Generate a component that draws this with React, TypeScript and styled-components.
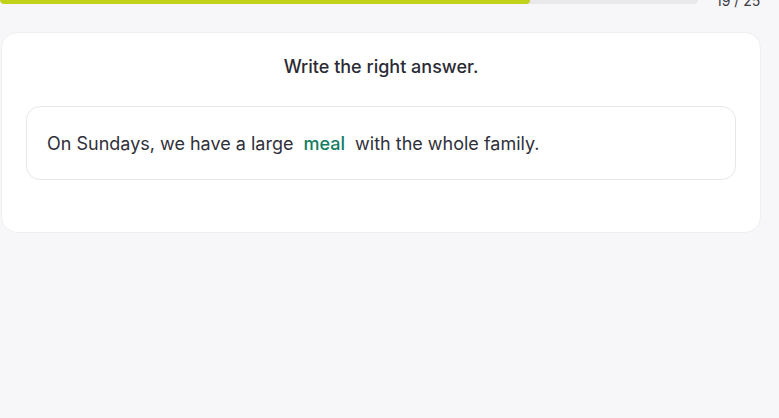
import React from 'react';
import styled, { createGlobalStyle } from 'styled-components';

// --- Global ---
const GlobalStyle = createGlobalStyle`
  html, body {
    margin: 0;
    padding: 0;
    background: #f7f7f9;
    font-family: Inter, "Noto Sans", sans-serif;
    color: #2b2b35;
  }
`;

// --- Styled Components ---
const Page = styled.div`
  width: 760px;
  padding-left: 1px;
  box-sizing: content-box;
`;

const ProgressRow = styled.div`
  display: flex;
  align-items: center;
  gap: 18px;
  margin-top: -11px;
  margin-left: -1px;
  height: 22px;
`;

const Track = styled.div`
  flex: 0 0 698px;
  height: 8px;
  border-radius: 4px;
  background: #e9e9ec;
  overflow: hidden;
`;

const Fill = styled.div<{ $pct: number }>`
  height: 100%;
  width: ${(p) => p.$pct}%;
  background: #c2d11a;
  border-radius: 4px;
`;

const Counter = styled.span`
  font-size: 14px;
  color: #3a3a44;
  white-space: nowrap;
`;

const Card = styled.section`
  margin-top: 21px;
  background: #ffffff;
  border: 1px solid #efeff2;
  border-radius: 16px;
  padding: 22px 24px 52px;
  display: flex;
  flex-direction: column;
  gap: 27px;
`;

const Title = styled.h2`
  margin: 0;
  text-align: center;
  font-size: 18px;
  font-weight: 500;
  line-height: 24px;
  color: #2b2b35;
`;

const SentenceBox = styled.div`
  border: 1px solid #e7e7ea;
  border-radius: 14px;
  padding: 24px 20px 23px;
  font-size: 18px;
  line-height: 25px;
  color: #30303a;
`;

const Answer = styled.span`
  display: inline-block;
  padding: 0 5px;
  color: #127c60;
  font-weight: 500;
`;

// --- Main Component ---
const App = () => {
  const current = 19;
  const total = 25;

  return (
    <>
      <GlobalStyle />
      <Page>
        <ProgressRow>
          <Track>
            <Fill $pct={(current / total) * 100} />
          </Track>
          <Counter>
            {current} / {total}
          </Counter>
        </ProgressRow>
        <Card>
          <Title>Write the right answer.</Title>
          <SentenceBox>
            On Sundays, we have a large <Answer>meal</Answer> with the whole family.
          </SentenceBox>
        </Card>
      </Page>
    </>
  );
};

export default App;
